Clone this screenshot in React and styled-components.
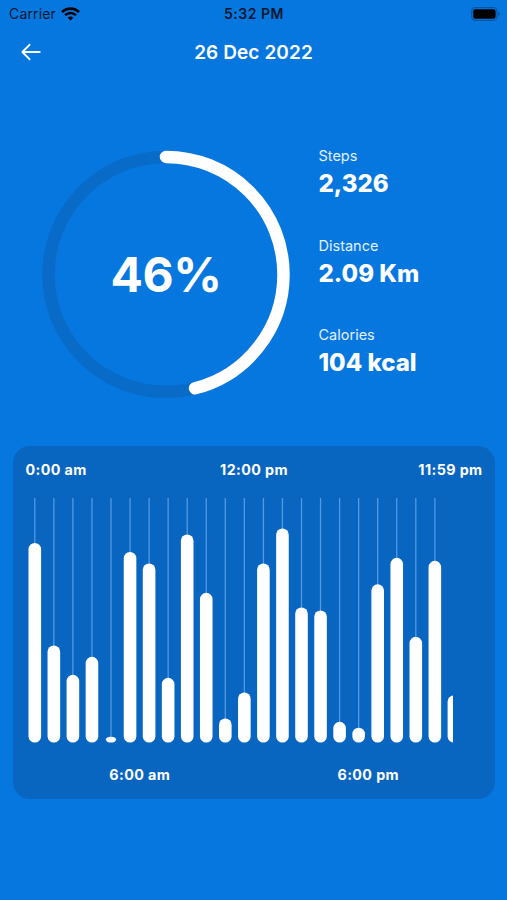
import React from 'react';
import styled, { createGlobalStyle } from 'styled-components';

const GlobalStyle = createGlobalStyle`
    * {
        box-sizing: border-box;
    }

    body {
        margin: 0;
        background-color: #0777e0;
    }
`;

const Screen = styled.main`
    display: flex;
    flex-direction: column;
    width: 507px;
    height: 900px;
    overflow: hidden;
    background-color: #0777e0;
    color: white;
    font-family: Inter, 'Liberation Sans', sans-serif;
`;

const StatusBar = styled.div`
    display: grid;
    grid-template-columns: 1fr auto 1fr;
    align-items: center;
    height: 28px;
    padding: 0 6px 0 9px;
    color: #03182f;
    font-size: 14px;
    line-height: 28px;
`;

const Carrier = styled.div`
    display: flex;
    align-items: center;
    gap: 5px;
    letter-spacing: 0.15px;
`;

const Clock = styled.span`
    margin-right: 2px;
    font-weight: 600;
    letter-spacing: 0.5px;
`;

const BatteryIcon = styled.svg`
    justify-self: end;
`;

const Header = styled.header`
    display: grid;
    grid-template-columns: 40px 1fr 40px;
    align-items: center;
    height: 48px;
    padding: 0 20px;
`;

const BackButton = styled.button`
    display: flex;
    padding: 0;
    border: none;
    background: none;
    color: white;
`;

const Title = styled.h1`
    margin: 0;
    padding-top: 1px;
    text-align: center;
    font-size: 19px;
    font-weight: 600;
    line-height: 24px;
    letter-spacing: 0.1px;
`;

const Summary = styled.section`
    display: flex;
    gap: 28.5px;
    height: 369.5px;
    padding: 70px 0 0 42px;
`;

const Ring = styled.div`
    display: grid;
    place-items: center;
    width: 248px;
    height: 248px;
    margin-top: 4px;

    > * {
        grid-area: 1 / 1;
    }
`;

const Percent = styled.span`
    padding-top: 2px;
    font-size: 48px;
    font-weight: 650;
    line-height: 56px;
    letter-spacing: -0.4px;
`;

const Stats = styled.dl`
    display: flex;
    flex-direction: column;
    gap: 37.5px;
    margin: 0;
`;

const StatLabel = styled.dt`
    font-size: 14.5px;
    line-height: 20px;
    color: #e3f1ff;
`;

const StatValue = styled.dd`
    margin: 4px 0 0;
    font-size: 24px;
    font-weight: 800;
    line-height: 28px;
`;

const Card = styled.section`
    display: flex;
    flex-direction: column;
    width: 482px;
    height: 353.5px;
    margin-left: 13px;
    padding: 14.5px 12.5px 0;
    border-radius: 17px;
    background-color: #0966c0;
`;

const Times = styled.div`
    display: grid;
    grid-template-columns: ${props => props.$columns};
    justify-items: center;
    font-size: 14.3px;
    font-weight: 700;
    line-height: 20px;
    letter-spacing: 0.4px;
`;

const Time = styled.span`
    justify-self: ${props => props.$align};
`;

const Chart = styled.svg`
    display: block;
    flex: none;
    margin: 18px 0 22px 2.5px;
    overflow: hidden;
`;

const RADIUS = 117.5;
const CIRCUMFERENCE = 2 * Math.PI * RADIUS;

const CHART_WIDTH = 425;
const CHART_HEIGHT = 244.5;
const BAR_WIDTH = 12.6;
const BAR_STEP = 19.05;

const stats = [
    { label: 'Steps', value: '2,326' },
    { label: 'Distance', value: '2.09 Km' },
    { label: 'Calories', value: '104 kcal' }
];

const hours = [
    199.5, 97, 67.7, 85.7, 5.8, 190.5, 179, 64.7, 208, 149.7, 24, 50,
    179, 214, 135, 132, 20.7, 14.8, 158.2, 184.7, 105.7, 181.7, 47
];

const Progress = ({ percent }) => (
    <Ring>
        <svg width="248" height="248" viewBox="0 0 248 248" fill="none" strokeWidth="12.5">
            <circle cx="124" cy="124.4" r={RADIUS} stroke="#096bc8" />
            <circle
                cx="124"
                cy="124.4"
                r={RADIUS}
                stroke="white"
                strokeLinecap="round"
                strokeDasharray={`${CIRCUMFERENCE * percent / 100} ${CIRCUMFERENCE}`}
                transform="rotate(-90 124 124.4)"
            />
        </svg>
        <Percent>{percent}%</Percent>
    </Ring>
);

const Bar = ({ x, height }) => {
    const center = x + BAR_WIDTH / 2;
    const guide = center - 0.65;

    return (
        <g fill="white">
            {guide + 1.3 < CHART_WIDTH - 1 && (
                <rect x={guide} width="1.3" height={CHART_HEIGHT - 4} fill="#5299df" />
            )}
            {height < BAR_WIDTH / 2 ? (
                <ellipse cx={center} cy={CHART_HEIGHT - height / 2} rx="5.2" ry={height / 2} />
            ) : (
                <rect x={x} y={CHART_HEIGHT - height} width={BAR_WIDTH} height={height} rx={BAR_WIDTH / 2} />
            )}
        </g>
    );
};

const HourlyChart = () => (
    <Chart width={CHART_WIDTH} height={CHART_HEIGHT}>
        {hours.map((height, i) => <Bar key={i} x={0.5 + i * BAR_STEP} height={height} />)}
    </Chart>
);

export default function App() {
    return (
        <Screen>
            <GlobalStyle />
            <StatusBar>
                <Carrier>
                    Carrier
                    <svg width="19" height="14" viewBox="0 0 19 14" fill="none" stroke="#000" strokeWidth="2.6">
                        <path d="M1 5.1C5.6 .5 13.4 .5 18 5.1" />
                        <path d="M4.1 8.2c3-3 7.8-3 10.8 0" />
                        <path d="M9.5 13.5 6.7 10.7c1.6-1.5 4-1.5 5.6 0Z" fill="#000" stroke="none" />
                    </svg>
                </Carrier>
                <Clock>5:32 PM</Clock>
                <BatteryIcon width="30" height="14" viewBox="0 0 30 14">
                    <rect x=".7" y=".7" width="25.2" height="12.6" rx="3.6" fill="none" stroke="#0555a2" strokeWidth="1.2" />
                    <rect x="2.2" y="2.2" width="22.4" height="9.6" rx="2.2" fill="#000" />
                    <path d="M27.2 4.6c2 .8 2 4 0 4.8Z" fill="#0555a2" />
                </BatteryIcon>
            </StatusBar>
            <Header>
                <BackButton aria-label="Back">
                    <svg width="22" height="18" viewBox="0 0 22 18" fill="none" stroke="currentColor" strokeWidth="1.9" strokeLinecap="round" strokeLinejoin="round">
                        <path d="M9.5 1.8 2.4 9l7.1 7.2M2.4 9h17.3" />
                    </svg>
                </BackButton>
                <Title>26 Dec 2022</Title>
            </Header>
            <Summary>
                <Progress percent={46} />
                <Stats>
                    {stats.map(stat => (
                        <div key={stat.label}>
                            <StatLabel>{stat.label}</StatLabel>
                            <StatValue>{stat.value}</StatValue>
                        </div>
                    ))}
                </Stats>
            </Summary>
            <Card>
                <Times $columns="1fr auto 1fr">
                    <Time $align="start">0:00 am</Time>
                    <Time>12:00 pm</Time>
                    <Time $align="end">11:59 pm</Time>
                </Times>
                <HourlyChart />
                <Times $columns="1fr 1fr">
                    <Time>6:00 am</Time>
                    <Time>6:00 pm</Time>
                </Times>
            </Card>
        </Screen>
    );
}
